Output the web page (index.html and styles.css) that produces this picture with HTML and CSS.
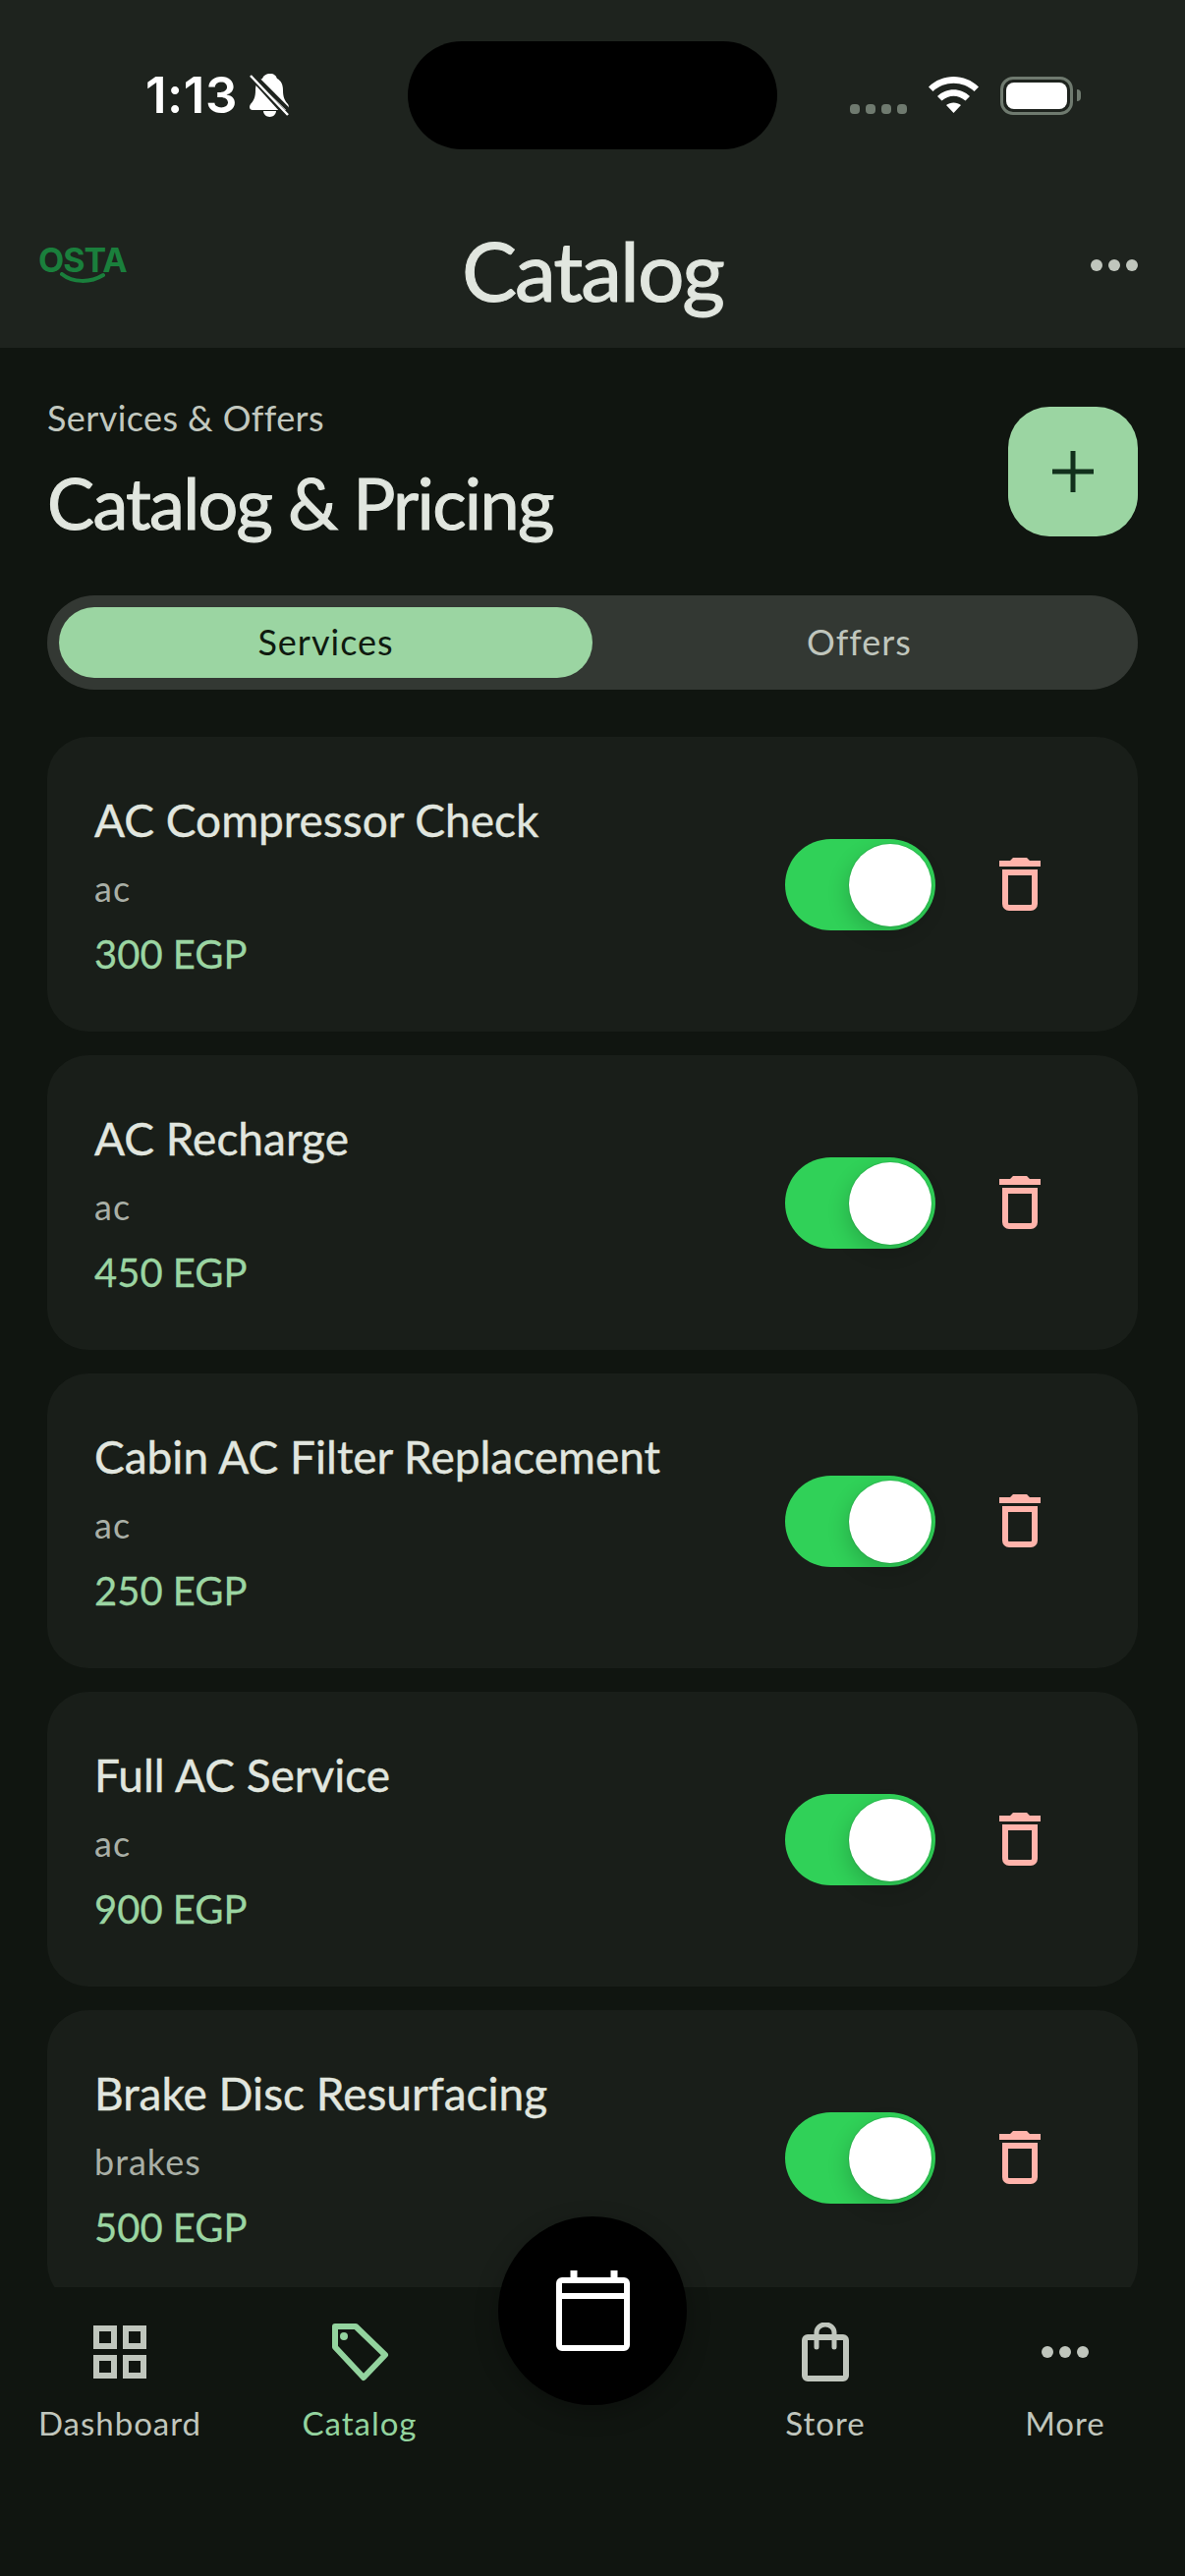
FILE: index.html
```html
<!DOCTYPE html>
<html lang="en">
<head>
    <meta charset="UTF-8">
    <meta name="viewport" content="width=device-width, initial-scale=1.0">
    <title>Catalog</title>
    <link rel="stylesheet" href="styles.css">
</head>
<body>
    <div class="phone">
        <header class="header">
            <div class="status-bar">
                <div class="status-left">
                    <span class="time">1:13</span>
                    <svg class="bell" width="40" height="44" viewBox="0 0 40 44">
                        <path fill="#fff" d="M21 0c4 0 6 2 7 5 4 2 6 6 6 12 0 7 2 11 5 14 2 3 0 6-2 6H3c-3 0-4-3-2-6 3-3 5-7 5-14 0-6 2-10 7-12 1-3 4-5 8-5z"/>
                        <path fill="#fff" d="M14 38h13c0 3-3 6-6.500 6s-6.500-3-6.500-6z"/>
                        <line x1="3" y1="0" x2="41" y2="38" stroke="#1e231e" stroke-width="4"/>
                        <line x1="0" y1="1" x2="38" y2="43" stroke="#1e231e" stroke-width="5"/>
                        <line x1="1" y1="2" x2="39" y2="42" stroke="#fff" stroke-width="2.500"/>
                    </svg>
                </div>
                <div class="island"></div>
                <div class="status-right">
                    <div class="signal"><i></i><i></i><i></i><i></i></div>
                    <svg width="51" height="37" viewBox="0 0 51 37">
                        <path fill="#fff" d="M0 10.500C14-3.500 37-3.500 51 10.500L46.500 15C35 4 16 4 4.500 15Z"/>
                        <path fill="#fff" d="M9 20C18 11 33 11 42 20L37.500 24.500C30 18 21 18 13.500 24.500Z"/>
                        <path fill="#fff" d="M18 29C22 25.500 29 25.500 33 29L25.500 37Z"/>
                    </svg>
                    <div class="battery"><div class="battery-level"></div></div>
                    <div class="battery-cap"></div>
                </div>
            </div>
            <div class="app-bar">
                <div class="logo">
                    <span class="logo-text">OSTA</span>
                    <svg class="logo-smile" width="46" height="12" viewBox="0 0 46 12">
                        <path d="M2 2C13 11 31 11 44 3" fill="none" stroke="#1a7f3c" stroke-width="4" stroke-linecap="round"/>
                    </svg>
                </div>
                <h1 class="app-title">Catalog</h1>
                <div class="dots header-dots"><i></i><i></i><i></i></div>
            </div>
        </header>

        <main class="content">
            <div class="page-head">
                <div>
                    <div class="eyebrow">Services &amp; Offers</div>
                    <h2 class="page-title">Catalog &amp; Pricing</h2>
                </div>
                <button class="add-btn">
                    <svg width="42" height="42" viewBox="0 0 42 42">
                        <path d="M21 0V42M0 21H42" stroke="#12301c" stroke-width="5"/>
                    </svg>
                </button>
            </div>

            <div class="tabs">
                <div class="tab active">Services</div>
                <div class="tab">Offers</div>
            </div>

            <div class="list">
                <div class="card">
                    <div class="card-info">
                        <div class="card-name">AC Compressor Check</div>
                        <div class="card-cat">ac</div>
                        <div class="card-price">300 EGP</div>
                    </div>
                    <div class="toggle"><div class="knob"></div></div>
                    <svg class="trash" width="42" height="54" viewBox="0 0 42 54"><path d="M11 3l3-3h14l3 3h11v6H0V3z" fill="#ffb4ab"/><path d="M6 12V47a4 4 0 0 0 4 4H32a4 4 0 0 0 4-4V15H6" fill="none" stroke="#ffb4ab" stroke-width="6"/></svg>
                </div>
                <div class="card">
                    <div class="card-info">
                        <div class="card-name">AC Recharge</div>
                        <div class="card-cat">ac</div>
                        <div class="card-price">450 EGP</div>
                    </div>
                    <div class="toggle"><div class="knob"></div></div>
                    <svg class="trash" width="42" height="54" viewBox="0 0 42 54"><path d="M11 3l3-3h14l3 3h11v6H0V3z" fill="#ffb4ab"/><path d="M6 12V47a4 4 0 0 0 4 4H32a4 4 0 0 0 4-4V15H6" fill="none" stroke="#ffb4ab" stroke-width="6"/></svg>
                </div>
                <div class="card">
                    <div class="card-info">
                        <div class="card-name">Cabin AC Filter Replacement</div>
                        <div class="card-cat">ac</div>
                        <div class="card-price">250 EGP</div>
                    </div>
                    <div class="toggle"><div class="knob"></div></div>
                    <svg class="trash" width="42" height="54" viewBox="0 0 42 54"><path d="M11 3l3-3h14l3 3h11v6H0V3z" fill="#ffb4ab"/><path d="M6 12V47a4 4 0 0 0 4 4H32a4 4 0 0 0 4-4V15H6" fill="none" stroke="#ffb4ab" stroke-width="6"/></svg>
                </div>
                <div class="card">
                    <div class="card-info">
                        <div class="card-name">Full AC Service</div>
                        <div class="card-cat">ac</div>
                        <div class="card-price">900 EGP</div>
                    </div>
                    <div class="toggle"><div class="knob"></div></div>
                    <svg class="trash" width="42" height="54" viewBox="0 0 42 54"><path d="M11 3l3-3h14l3 3h11v6H0V3z" fill="#ffb4ab"/><path d="M6 12V47a4 4 0 0 0 4 4H32a4 4 0 0 0 4-4V15H6" fill="none" stroke="#ffb4ab" stroke-width="6"/></svg>
                </div>
                <div class="card">
                    <div class="card-info">
                        <div class="card-name">Brake Disc Resurfacing</div>
                        <div class="card-cat">brakes</div>
                        <div class="card-price">500 EGP</div>
                    </div>
                    <div class="toggle"><div class="knob"></div></div>
                    <svg class="trash" width="42" height="54" viewBox="0 0 42 54"><path d="M11 3l3-3h14l3 3h11v6H0V3z" fill="#ffb4ab"/><path d="M6 12V47a4 4 0 0 0 4 4H32a4 4 0 0 0 4-4V15H6" fill="none" stroke="#ffb4ab" stroke-width="6"/></svg>
                </div>
            </div>
        </main>

        <nav class="nav">
            <div class="nav-item">
                <div class="nav-icon">
                    <svg width="54" height="54" viewBox="0 0 54 54" fill="none" stroke="#c0c6bd" stroke-width="6">
                        <rect x="3" y="3" width="18" height="18"/><rect x="33" y="3" width="18" height="18"/>
                        <rect x="3" y="33" width="18" height="18"/><rect x="33" y="33" width="18" height="18"/>
                    </svg>
                </div>
                <span>Dashboard</span>
            </div>
            <div class="nav-item active">
                <div class="nav-icon">
                    <svg width="60" height="60" viewBox="0 0 60 60" fill="none" stroke="#93d39e" stroke-width="6" stroke-linejoin="round">
                        <path d="M5 4H26L56 33L34 56L5 25Z"/>
                        <circle cx="14" cy="14" r="4" fill="#93d39e" stroke="none"/>
                    </svg>
                </div>
                <span>Catalog</span>
            </div>
            <div></div>
            <div class="nav-item">
                <div class="nav-icon">
                    <svg width="48" height="60" viewBox="0 0 48 60" fill="none" stroke="#c0c6bd" stroke-width="6">
                        <rect x="3" y="15" width="42" height="42" rx="3"/>
                        <path d="M15 25V10a9 8 0 0 1 18 0V25" stroke-width="5" stroke-linecap="round"/>
                    </svg>
                </div>
                <span>Store</span>
            </div>
            <div class="nav-item">
                <div class="nav-icon">
                    <div class="dots"><i></i><i></i><i></i></div>
                </div>
                <span>More</span>
            </div>
            <button class="fab">
                <svg width="75" height="82" viewBox="0 0 75 82" fill="none" stroke="#fff" stroke-width="6">
                    <rect x="3" y="10" width="69" height="69" rx="3"/>
                    <path d="M3 26H72"/>
                    <path d="M18 0V12M59 0V12" stroke-width="7"/>
                </svg>
            </button>
        </nav>
    </div>
</body>
</html>
```

FILE: styles.css
```css
* {
    box-sizing: border-box;
}
body {
    margin: 0;
    background-color: #101510;
    font-family: "Lato", "Noto Sans", sans-serif;
}
.phone {
    width: 1206px;
    height: 2622px;
    display: flex;
    flex-direction: column;
    overflow: hidden;
    background-color: #101510;
}

/* header */
.header {
    height: 354px;
    background-color: #1e231e;
    flex-shrink: 0;
}
.status-bar {
    height: 152px;
    padding-top: 42px;
    display: flex;
    position: relative;
}
.status-left {
    width: 415px;
    padding: 33px 0 0 148px;
    display: flex;
    align-items: flex-start;
    gap: 12px;
}
.time {
    font-family: "Inter", sans-serif;
    font-size: 51px;
    line-height: 44px;
    font-weight: 600;
    color: #fff;
    letter-spacing: 0.5px;
}
.island {
    width: 376px;
    height: 110px;
    background-color: #000;
    border-radius: 55px;
}
.status-right {
    flex: 1;
    padding: 36px 0 0 74px;
    display: flex;
    align-items: flex-start;
}
.signal {
    display: flex;
    gap: 6px;
    margin: 28px 22px 0 0;
}
.signal i {
    width: 10px;
    height: 10px;
    border-radius: 4px;
    background-color: #6f7a6f;
}
.battery {
    width: 74px;
    height: 39px;
    margin-left: 22px;
    padding: 6px;
    border-radius: 13px;
    background-color: #1e231e;
    border: 3px solid #6f7a6f;
}
.battery-level {
    margin: -3px;
    height: 27px;
    border-radius: 8px;
    background-color: #fff;
}
.battery-cap {
    width: 4px;
    height: 12px;
    margin: 13px 0 0 4px;
    border-radius: 0 4px 4px 0;
    background-color: #6f7a6f;
}
.app-bar {
    display: grid;
    grid-template-columns: 1fr auto 1fr;
    padding: 100px 48px 0 48px;
}
.logo {
    display: flex;
    flex-direction: column;
    margin-left: -9px;
}
.logo-text {
    font-family: "Inter", sans-serif;
    font-size: 34px;
    font-weight: 700;
    line-height: 25px;
    letter-spacing: -1px;
    color: #1a7f3c;
}
.logo-smile {
    margin-left: 22px;
}
.app-title {
    margin: -32px 0 0;
    font-size: 84px;
    line-height: 110px;
    font-weight: 400;
    letter-spacing: -2px;
    -webkit-text-stroke: 1px #e1e6df;
    color: #e1e6df;
}
.dots {
    display: flex;
    gap: 6px;
}
.dots i {
    width: 12px;
    height: 12px;
    border-radius: 50%;
    background-color: #c0c6bd;
}
.header-dots {
    justify-content: flex-end;
    margin-top: 12px;
}

/* content */
.content {
    flex: 1;
    min-height: 0;
    padding: 60px 48px 0;
    overflow: hidden;
}
.page-head {
    display: flex;
    justify-content: space-between;
    align-items: flex-start;
}
.eyebrow {
    margin-top: -11px;
    font-size: 36px;
    line-height: 44px;
    letter-spacing: 0.4px;
    color: #c2c8bf;
}
.page-title {
    margin: 29px 0 0;
    font-size: 72px;
    line-height: 70px;
    font-weight: 400;
    letter-spacing: -1.7px;
    -webkit-text-stroke: 1px #e1e6df;
    color: #e1e6df;
}
.add-btn {
    width: 132px;
    height: 132px;
    border: none;
    border-radius: 42px;
    background-color: #9bd5a2;
    display: flex;
    align-items: center;
    justify-content: center;
    padding: 0;
}
.tabs {
    margin-top: 60px;
    height: 96px;
    padding: 12px;
    border-radius: 48px;
    background-color: #333833;
    display: flex;
    gap: 0;
}
.tab {
    flex: 1;
    border-radius: 36px;
    display: flex;
    align-items: center;
    justify-content: center;
    font-size: 36px;
    letter-spacing: 1px;
    padding-bottom: 2px;
    color: #c0c6bd;
}
.tab.active {
    background-color: #9bd5a2;
    color: #0f1a10;
}
.list {
    margin-top: 48px;
    display: flex;
    flex-direction: column;
    gap: 24px;
}
.card {
    height: 300px;
    flex-shrink: 0;
    padding: 0 99px 0 48px;
    border-radius: 42px;
    background-color: #191e19;
    display: flex;
    align-items: center;
}
.card-info {
    flex: 1;
}
.card-name {
    font-size: 46px;
    line-height: 60px;
    -webkit-text-stroke: 0.4px #e1e6df;
    color: #e1e6df;
}
.card-cat {
    margin-top: 17px;
    font-size: 36px;
    line-height: 44px;
    letter-spacing: 1px;
    color: #a9afa6;
}
.card-price {
    margin-top: 21px;
    font-size: 40px;
    line-height: 48px;
    -webkit-text-stroke: 0.3px #9bd5a2;
    color: #9bd5a2;
}
.toggle {
    width: 153px;
    height: 93px;
    padding: 5px 4px;
    border-radius: 47px;
    background-color: #30d158;
    display: flex;
    justify-content: flex-end;
    flex-shrink: 0;
}
.knob {
    width: 84px;
    height: 84px;
    border-radius: 50%;
    background-color: #fff;
    box-shadow: -3px 8px 20px rgba(0, 0, 0, 0.16), 0 0 0 1px rgba(0, 0, 0, 0.08);
}
.trash {
    margin-left: 65px;
    flex-shrink: 0;
}

/* bottom nav */
.nav {
    height: 294px;
    flex-shrink: 0;
    position: relative;
    background-color: #101510;
    display: grid;
    grid-template-columns: 244px 244px 1fr 244px 244px;
    padding-top: 36px;
}
.nav-item {
    display: flex;
    flex-direction: column;
    align-items: center;
    font-size: 33px;
    letter-spacing: 1px;
    line-height: 44px;
    color: #c0c6bd;
}
.nav-item.active {
    color: #93d39e;
}
.nav-icon {
    height: 60px;
    margin-bottom: 20px;
    display: flex;
    align-items: center;
    justify-content: center;
}
.fab {
    position: absolute;
    left: 507px;
    top: -72px;
    width: 192px;
    height: 192px;
    border: none;
    padding: 0;
    border-radius: 50%;
    background-color: #000;
    box-shadow: 0 8px 24px rgba(0, 0, 0, 0.25);
    display: flex;
    align-items: center;
    justify-content: center;
}
```
